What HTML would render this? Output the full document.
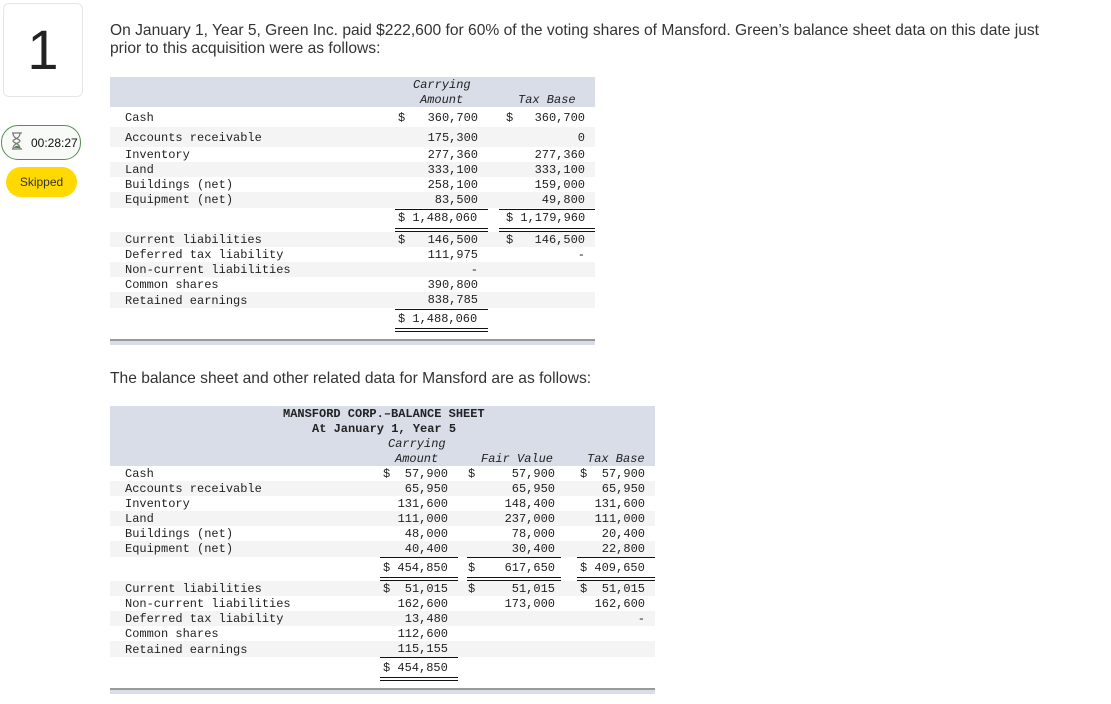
<!DOCTYPE html>
<html><head><meta charset="utf-8"><style>
body{margin:0;width:1111px;height:704px;background:#fff;position:relative;overflow:hidden;font-family:"Liberation Sans",sans-serif;}
.a{position:absolute;white-space:pre;}
.m{font-family:"Liberation Mono",monospace;font-size:12px;line-height:15px;color:#222;}
.i{font-style:italic;}
.b{font-weight:bold;}
.bg{position:absolute;background:#d9dde8;}
.st{position:absolute;background:#f4f4f4;}
.ln{position:absolute;height:1px;background:#111;}
.dl{position:absolute;height:2px;border-top:1px solid #111;border-bottom:1px solid #111;}
.p{position:absolute;font-size:15.6px;color:#333;line-height:18px;}
.r1{position:absolute;right:633px;text-align:right;}
.r2{position:absolute;right:526px;text-align:right;}
</style></head><body>
<div class="a" style="left:3px;top:3px;width:78px;height:92px;border:1px solid #e6e6e6;border-radius:6px;"></div>
<div class="a" style="left:3px;top:10px;width:80px;text-align:center;font-size:56px;color:#222;line-height:80px;">1</div>
<div class="a" style="left:1px;top:125px;width:78px;height:33px;border:1px solid #5a8a5a;border-radius:17px;background:#f7faf7;"></div>
<svg class="a" style="left:11px;top:132px" width="12" height="18" viewBox="0 0 12 18"><path d="M1 1h10M1 17h10M2 1c0 6 7 6 7 8s-7 2-7 8M9 1c0 6-7 6-7 8s7 2 7 8" fill="none" stroke="#777" stroke-width="1.2"/><path d="M3 16c1-3 5-3 6 0z" fill="#4a8a4a"/></svg>
<div class="a" style="left:31px;top:136px;font-size:12px;color:#111;">00:28:27</div>
<div class="a" style="left:6px;top:167px;width:71px;height:30px;border-radius:15px;background:#ffd900;"></div>
<div class="a" style="left:6px;top:175px;width:71px;text-align:center;font-size:12px;color:#333;">Skipped</div>

<div class="p" style="left:110px;top:22px;width:945px;">On January 1, Year 5, Green Inc. paid $222,600 for 60% of the voting shares of Mansford. Green’s balance sheet data on this date just prior to this acquisition were as follows:</div>

<!-- table 1 -->
<div class="bg" style="left:110px;top:77px;width:485px;height:30px;"></div>
<div class="st" style="left:110px;top:127px;width:485px;height:20px;"></div>
<div class="st" style="left:110px;top:162px;width:485px;height:15px;"></div>
<div class="st" style="left:110px;top:192px;width:485px;height:16px;"></div>
<div class="st" style="left:110px;top:232px;width:485px;height:15px;"></div>
<div class="st" style="left:110px;top:262px;width:485px;height:15px;"></div>
<div class="st" style="left:110px;top:292px;width:485px;height:16px;"></div>
<div class="a m i" style="left:413px;top:78px;">Carrying</div>
<div class="a m i" style="left:420px;top:93px;">Amount</div>
<div class="a m i" style="left:518px;top:93px;">Tax Base</div>

<div class="a m" style="left:125px;top:111px;">Cash</div>
<div class="a m" style="left:125px;top:131px;">Accounts receivable</div>
<div class="a m" style="left:125px;top:148px;">Inventory</div>
<div class="a m" style="left:125px;top:163px;">Land</div>
<div class="a m" style="left:125px;top:178px;">Buildings (net)</div>
<div class="a m" style="left:125px;top:193px;">Equipment (net)</div>
<div class="a m" style="left:398px;top:111px;">$</div><div class="a m" style="left:506px;top:111px;">$</div>
<div class="m r1" style="top:111px;">360,700</div><div class="m r2" style="top:111px;">360,700</div>
<div class="m r1" style="top:131px;">175,300</div><div class="m r2" style="top:131px;">0</div>
<div class="m r1" style="top:148px;">277,360</div><div class="m r2" style="top:148px;">277,360</div>
<div class="m r1" style="top:163px;">333,100</div><div class="m r2" style="top:163px;">333,100</div>
<div class="m r1" style="top:178px;">258,100</div><div class="m r2" style="top:178px;">159,000</div>
<div class="m r1" style="top:193px;">83,500</div><div class="m r2" style="top:193px;">49,800</div>
<div class="ln" style="left:395px;top:209px;width:93px;"></div><div class="ln" style="left:499px;top:209px;width:96px;"></div>
<div class="a m" style="left:398px;top:211px;">$ 1,488,060</div><div class="a m" style="left:506px;top:211px;">$ 1,179,960</div>
<div class="dl" style="left:395px;top:228px;width:93px;"></div><div class="dl" style="left:499px;top:228px;width:96px;"></div>

<div class="a m" style="left:125px;top:233px;">Current liabilities</div>
<div class="a m" style="left:125px;top:248px;">Deferred tax liability</div>
<div class="a m" style="left:125px;top:263px;">Non-current liabilities</div>
<div class="a m" style="left:125px;top:278px;">Common shares</div>
<div class="a m" style="left:125px;top:294px;">Retained earnings</div>
<div class="a m" style="left:398px;top:233px;">$</div><div class="a m" style="left:506px;top:233px;">$</div>
<div class="m r1" style="top:233px;">146,500</div><div class="m r2" style="top:233px;">146,500</div>
<div class="m r1" style="top:248px;">111,975</div><div class="m r2" style="top:248px;">-</div>
<div class="m r1" style="top:263px;">-</div>
<div class="m r1" style="top:278px;">390,800</div>
<div class="m r1" style="top:293px;">838,785</div>
<div class="ln" style="left:395px;top:309px;width:93px;"></div>
<div class="a m" style="left:398px;top:312px;">$ 1,488,060</div>
<div class="dl" style="left:395px;top:328px;width:93px;"></div>
<div class="a" style="left:110px;top:339px;width:485px;height:6px;background:#d9dde8;border-top:2px solid #999;box-sizing:border-box;"></div>

<div class="p" style="left:110px;top:370px;">The balance sheet and other related data for Mansford are as follows:</div>

<!-- table 2 -->
<div class="bg" style="left:110px;top:406px;width:545px;height:60px;"></div>
<div class="st" style="left:110px;top:481px;width:545px;height:15px;"></div>
<div class="st" style="left:110px;top:511px;width:545px;height:15px;"></div>
<div class="st" style="left:110px;top:541px;width:545px;height:16px;"></div>
<div class="st" style="left:110px;top:581px;width:545px;height:15px;"></div>
<div class="st" style="left:110px;top:611px;width:545px;height:15px;"></div>
<div class="st" style="left:110px;top:641px;width:545px;height:16px;"></div>
<div class="a m b" style="left:283px;top:407px;">MANSFORD CORP.–BALANCE SHEET</div>
<div class="a m b" style="left:312px;top:422px;">At January 1, Year 5</div>
<div class="a m i" style="left:388px;top:437px;">Carrying</div>
<div class="a m i" style="left:395px;top:452px;">Amount</div>
<div class="a m i" style="left:481px;top:452px;">Fair Value</div>
<div class="a m i" style="left:587px;top:452px;">Tax Base</div>
<div class="a m" style="left:125px;top:467px;">Cash
Accounts receivable
Inventory
Land
Buildings (net)
Equipment (net)</div>
<div class="a m" style="left:125px;top:582px;">Current liabilities
Non-current liabilities
Deferred tax liability
Common shares
<span style="line-height:16px">Retained earnings</span></div>
<div class="a m" style="left:383px;top:467px;">$</div><div class="a m" style="left:468px;top:467px;">$</div><div class="a m" style="left:580px;top:467px;">$</div>
<div class="a m" style="right:663px;top:467px;text-align:right;">57,900
65,950
131,600
111,000
48,000
40,400</div>
<div class="a m" style="right:556px;top:467px;text-align:right;">57,900
65,950
148,400
237,000
78,000
30,400</div>
<div class="a m" style="right:466px;top:467px;text-align:right;">57,900
65,950
131,600
111,000
20,400
22,800</div>
<div class="ln" style="left:380px;top:557px;width:78px;"></div><div class="ln" style="left:467px;top:557px;width:94px;"></div><div class="ln" style="left:577px;top:557px;width:78px;"></div>
<div class="a m" style="left:383px;top:561px;">$ 454,850</div><div class="a m" style="left:468px;top:561px;">$</div><div class="a m" style="right:556px;top:561px;">617,650</div><div class="a m" style="left:580px;top:561px;">$ 409,650</div>
<div class="dl" style="left:380px;top:577px;width:78px;"></div><div class="dl" style="left:467px;top:577px;width:94px;"></div><div class="dl" style="left:577px;top:577px;width:78px;"></div>
<div class="a m" style="left:383px;top:582px;">$</div><div class="a m" style="left:468px;top:582px;">$</div><div class="a m" style="left:580px;top:582px;">$</div>
<div class="a m" style="right:663px;top:582px;text-align:right;">51,015
162,600
13,480
112,600
115,155</div>
<div class="a m" style="right:556px;top:582px;text-align:right;">51,015
173,000</div>
<div class="a m" style="right:466px;top:582px;text-align:right;">51,015
162,600
-</div>
<div class="ln" style="left:380px;top:657px;width:78px;"></div>
<div class="a m" style="left:383px;top:661px;">$ 454,850</div>
<div class="dl" style="left:380px;top:677px;width:78px;"></div>
<div class="a" style="left:110px;top:688px;width:545px;height:6px;background:#d9dde8;border-top:2px solid #999;box-sizing:border-box;"></div>
</body></html>
